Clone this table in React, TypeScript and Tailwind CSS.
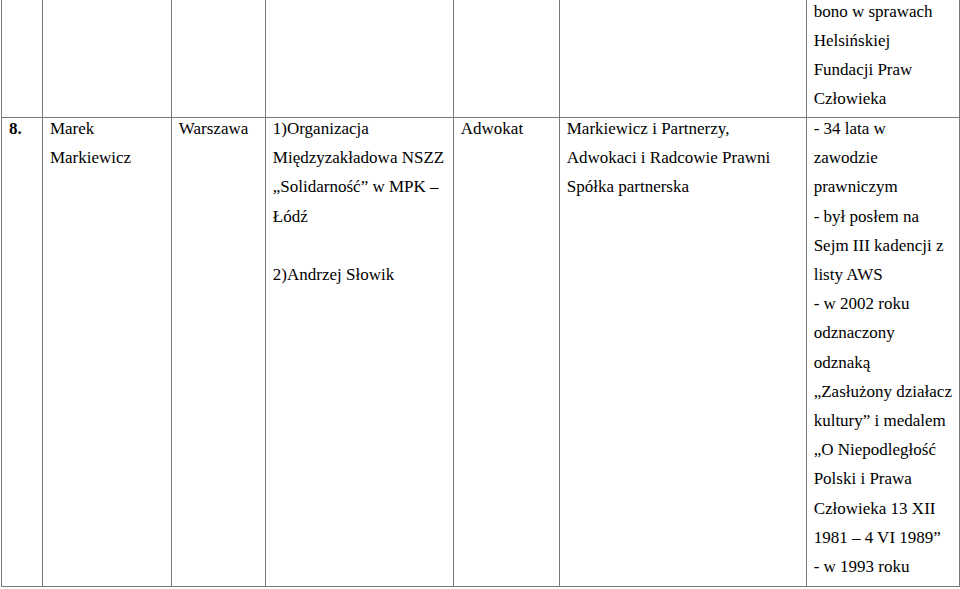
import React from 'react';

const cell = 'border border-[#7a7a7a] px-[7px] align-top';

const career = [
  '- 34 lata w',
  'zawodzie',
  'prawniczym',
  '- był posłem na',
  'Sejm III kadencji z',
  'listy AWS',
  '- w 2002 roku',
  'odznaczony',
  'odznaką',
  '„Zasłużony działacz',
  'kultury” i medalem',
  '„O Niepodległość',
  'Polski i Prawa',
  'Człowieka 13 XII',
  '1981 – 4 VI 1989”',
  '- w 1993 roku',
];

const Lines = ({ items, bold }: { items: string[]; bold?: boolean }) => (
  <div className={`-mt-[3.4px] ${bold ? 'font-bold' : ''}`}>
    {items.map((t, i) => (
      <div key={i} className="whitespace-nowrap h-[29.2px]">
        {t}
      </div>
    ))}
  </div>
);

export default function App() {
  return (
    <div className="w-[960px] h-[589px] overflow-hidden bg-white text-black font-['Liberation_Serif',serif] text-[17px] leading-[29.2px]">
      <table className="table-fixed border-collapse ml-px">
        <colgroup>
          <col className="w-[41px]" />
          <col className="w-[129px]" />
          <col className="w-[94px]" />
          <col className="w-[188px]" />
          <col className="w-[106px]" />
          <col className="w-[247px]" />
          <col className="w-[152px]" />
        </colgroup>
        <tbody>
          <tr className="h-[117px]">
            <td className={`${cell} border-t-0`} />
            <td className={`${cell} border-t-0`} />
            <td className={`${cell} border-t-0`} />
            <td className={`${cell} border-t-0`} />
            <td className={`${cell} border-t-0`} />
            <td className={`${cell} border-t-0`} />
            <td className={`${cell} border-t-0`}>
              <Lines items={['bono w sprawach', 'Helsińskiej', 'Fundacji Praw', 'Człowieka']} />
            </td>
          </tr>
          <tr className="h-[469px]">
            <td className={cell}>
              <Lines items={['8.']} bold />
            </td>
            <td className={cell}>
              <Lines items={['Marek', 'Markiewicz']} />
            </td>
            <td className={cell}>
              <Lines items={['Warszawa']} />
            </td>
            <td className={cell}>
              <Lines
                items={[
                  '1)Organizacja',
                  'Międzyzakładowa NSZZ',
                  '„Solidarność” w MPK –',
                  'Łódź',
                  '',
                  '2)Andrzej Słowik',
                ]}
              />
            </td>
            <td className={cell}>
              <Lines items={['Adwokat']} />
            </td>
            <td className={cell}>
              <Lines
                items={[
                  'Markiewicz i Partnerzy,',
                  'Adwokaci i Radcowie Prawni',
                  'Spółka partnerska',
                ]}
              />
            </td>
            <td className={cell}>
              <Lines items={career} />
            </td>
          </tr>
        </tbody>
      </table>
    </div>
  );
}
